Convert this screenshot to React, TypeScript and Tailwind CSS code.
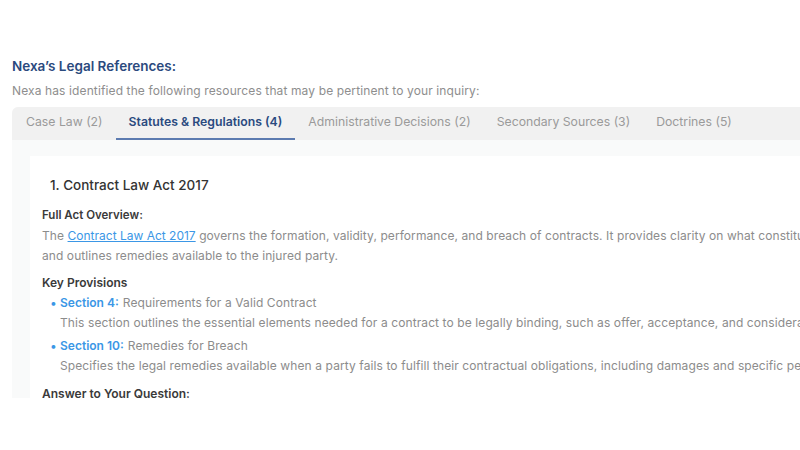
import React from "react";

const tabs = [
  { label: "Case Law (2)", active: false },
  { label: "Statutes & Regulations (4)", active: true },
  { label: "Administrative Decisions (2)", active: false },
  { label: "Secondary Sources (3)", active: false },
  { label: "Doctrines (5)", active: false },
];

const provisions = [
  {
    section: "Section 4:",
    title: "Requirements for a Valid Contract",
    text: "This section outlines the essential elements needed for a contract to be legally binding, such as offer, acceptance, and consideration.",
  },
  {
    section: "Section 10:",
    title: "Remedies for Breach",
    text: "Specifies the legal remedies available when a party fails to fulfill their contractual obligations, including damages and specific performance.",
  },
];

const App: React.FC = () => {
  return (
    <div
      className="w-[800px] h-[450px] overflow-hidden bg-white whitespace-nowrap"
      style={{ fontFamily: "Inter, 'Open Sans', sans-serif" }}
    >
      <div className="pt-[57px] pl-3">
        <h2 className="text-[13.5px] font-semibold text-[#2b4a7e] leading-[18px]">
          Nexa’s Legal References:
        </h2>
        <p className="mt-[8px] text-[12px] tracking-[0.12px] text-[#8e8e8e] leading-[16px]">
          Nexa has identified the following resources that may be pertinent to your inquiry:
        </p>

        <div className="mt-[8px] w-[900px] h-[291px] overflow-hidden rounded-tl-md bg-[#f9fafa]">
          <div className="flex h-[33px] bg-[#f1f1f1] pl-[1px]">
            {tabs.map((t) => (
              <div
                key={t.label}
                className={
                  t.active
                    ? "px-[13px] flex items-center text-[12.25px] font-semibold text-[#2a4a7f] border-b-2 border-[#5c7bb0]"
                    : "px-[13px] flex items-center text-[12.25px] text-[#9a9a9a] border-b-2 border-transparent"
                }
              >
                {t.label}
              </div>
            ))}
          </div>

          <div className="ml-[18px] mt-[16px] bg-white pl-3 pt-[19px]">
            <h3 className="pl-2 text-[13.5px] font-medium text-[#333] leading-[20px]">
              1. Contract Law Act 2017
            </h3>
            <div className="mt-[12px] text-[11.5px] font-semibold text-[#3a3a3a] leading-[16px]">
              Full Act Overview:
            </div>
            <p className="mt-[3px] text-[12px] tracking-[0.08px] text-[#8c8c8c] leading-[20px]">
              The{" "}
              <span className="text-[#3b97e6] underline tracking-normal">Contract Law Act 2017</span>{" "}
              governs the formation, validity, performance, and breach of contracts. It provides clarity on what constitutes a valid agreement
              <br />
              and outlines remedies available to the injured party.
            </p>
            <div className="mt-[9px] text-[12px] font-semibold text-[#3a3a3a] leading-[16px]">
              Key Provisions
            </div>
            <ul className="mt-[2px] pl-2">
              {provisions.map((p) => (
                <li key={p.section} className="mb-[3px]">
                  <div className="flex items-center text-[12px] leading-[20px]">
                    <span className="w-[10px] text-[#3b97e6]">•</span>
                    <span className="font-semibold text-[#3b97e6]">{p.section}</span>
                    <span className="ml-1 tracking-[0.1px] text-[#8c8c8c]">{p.title}</span>
                  </div>
                  <div className="pl-[10px] text-[12px] tracking-[0.1px] text-[#8c8c8c] leading-[20px]">
                    {p.text}
                  </div>
                </li>
              ))}
            </ul>
            <div className="mt-[10px] text-[12px] font-semibold text-[#3a3a3a] leading-[16px]">
              Answer to Your Question:
            </div>
          </div>
        </div>
      </div>
    </div>
  );
};

export default App;
